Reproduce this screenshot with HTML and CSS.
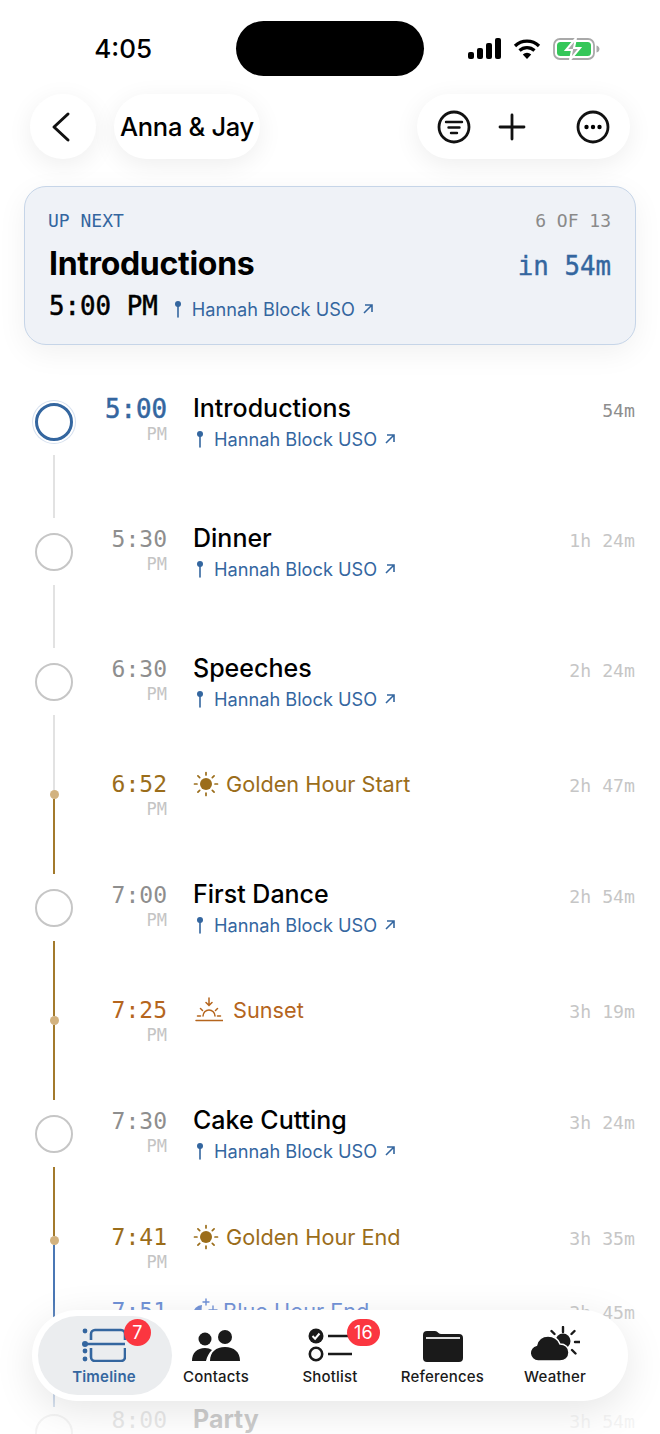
FILE: index.html
```html
<!DOCTYPE html>
<html lang="en">
<head>
  <meta charset="UTF-8" />
  <meta name="viewport" content="width=device-width, initial-scale=1" />
  <title>Anna &amp; Jay - Timeline</title>
  <link rel="stylesheet" href="styles.css">
</head>
<body>
  <svg class="defs" width="0" height="0">
    <symbol id="pin" viewBox="0 0 10 18">
      <circle cx="5" cy="4" r="3" fill="currentColor"/>
      <path d="M5 6v11" stroke="currentColor" stroke-width="1.6" stroke-linecap="round"/>
    </symbol>
    <symbol id="arrow" viewBox="0 0 12 12">
      <path d="M2 10 10 2M3 2h7v7" fill="none" stroke="currentColor" stroke-width="1.6"/>
    </symbol>
    <symbol id="sun" viewBox="0 0 26 26">
      <circle cx="13" cy="13" r="6" fill="currentColor"/>
      <path d="M13 1.5V4M13 22v2.5M1.5 13H4M22 13h2.5M4.9 4.9l1.8 1.8M19.300 19.300l1.8 1.8M4.900 21.100l1.800-1.800M19.300 6.700l1.800-1.800" stroke="currentColor" stroke-width="1.7" stroke-linecap="round"/>
    </symbol>
    <symbol id="sunset" viewBox="0 0 28 26">
      <path d="M14 1v7M11 5.500 14 8.500 17 5.500M1 23.500h27M8 19a6 6 0 0 1 12 0M2.500 19h3M22.500 19h3M5.500 11.500l2 2M22.500 11.500l-2 2" fill="none" stroke="currentColor" stroke-width="1.5" stroke-linecap="round"/>
    </symbol>
    <symbol id="bluehour" viewBox="0 0 26 26">
      <path d="M9 7a9 9 0 0 0 0 18c2 0 3-.5 4-1-4-3-5-11-4-17Z" fill="currentColor"/>
      <path d="M13 1v6M10 4h6M20 8v8M16 12h8" stroke="currentColor" stroke-width="1.4" stroke-linecap="round"/>
    </symbol>
  </svg>

  <div class="phone">
    <div class="statusbar">
      <span class="clock">4:05</span>
      <div class="island"></div>
      <div class="status-icons">
        <svg width="34" height="21" viewBox="0 0 34 21"><rect x="1" y="14" width="6" height="7" rx="2"/><rect x="10" y="10" width="6" height="11" rx="2"/><rect x="19" y="5" width="6" height="16" rx="2"/><rect x="28" y="0" width="6" height="21" rx="2"/></svg>
        <svg width="28" height="21" viewBox="0 0 28 21"><path d="M14 21 9.8 16.500a6 6 0 0 1 8.400 0Z"/><path d="M2 8a17 17 0 0 1 24 0M6.500 12.500a11 11 0 0 1 15 0" fill="none" stroke="#000" stroke-width="3.2"/></svg>
        <svg width="47" height="22" viewBox="0 0 47 22">
          <rect x="1" y="1" width="40" height="20" rx="6" fill="none" stroke="#a9a9a9" stroke-width="1.8"/>
          <path d="M43.500 7.500c2 .5 3 2 3 3.500s-1 3-3 3.500Z" fill="#a9a9a9"/>
          <rect x="4" y="4" width="34" height="14" rx="3.500" fill="#35c759"/>
          <path d="M23 0 13 12h6l-2 10 10-12h-6Z" fill="#a9a9a9" stroke="#fff" stroke-width="2"/>
        </svg>
      </div>
    </div>

    <header class="topbar">
      <button class="glass back">
        <svg width="22" height="32" viewBox="0 0 22 32"><path d="M18 3 4 16l14 13" fill="none" stroke="#111" stroke-width="3" stroke-linecap="round" stroke-linejoin="round"/></svg>
      </button>
      <div class="glass title-pill">Anna &amp; Jay</div>
      <div class="glass actions">
        <svg width="34" height="34" viewBox="0 0 34 34"><circle cx="17" cy="17" r="15" fill="none" stroke="#111" stroke-width="2.8"/><path d="M9 12h16M11.500 17.500h11M14 23h6" stroke="#111" stroke-width="2.4" stroke-linecap="round"/></svg>
        <svg width="28" height="28" viewBox="0 0 28 28"><path d="M14 2v24M2 14h24" stroke="#111" stroke-width="2.8" stroke-linecap="round"/></svg>
        <svg class="more" width="34" height="34" viewBox="0 0 34 34"><circle cx="17" cy="17" r="15" fill="none" stroke="#111" stroke-width="2.8"/><circle cx="10.500" cy="17" r="2.200"/><circle cx="17" cy="17" r="2.200"/><circle cx="23.500" cy="17" r="2.200"/></svg>
      </div>
    </header>

    <section class="next-card">
      <div class="next-row">
        <span class="mono label">UP NEXT</span>
        <span class="mono count">6 OF 13</span>
      </div>
      <div class="next-row next-main">
        <h1>Introductions</h1>
        <span class="mono countdown">in 54m</span>
      </div>
      <div class="next-meta">
        <span class="mono next-time">5:00 PM</span>
        <span class="place">
          <svg class="pin"><use href="#pin"/></svg>Hannah Block USO<svg class="arrow"><use href="#arrow"/></svg>
        </span>
      </div>
    </section>

    <main class="timeline">
      <div class="row h130">
        <div class="rail"><span class="node current"></span><span class="line grey gap-end"></span></div>
        <div class="time now"><b>5:00</b><small>PM</small></div>
        <div class="body"><h2>Introductions</h2><span class="place"><svg class="pin"><use href="#pin"/></svg>Hannah Block USO<svg class="arrow"><use href="#arrow"/></svg></span></div>
        <div class="dur strong">54m</div>
      </div>

      <div class="row h130">
        <div class="rail"><span class="node"></span><span class="line grey gap-end"></span></div>
        <div class="time"><b>5:30</b><small>PM</small></div>
        <div class="body"><h2>Dinner</h2><span class="place"><svg class="pin"><use href="#pin"/></svg>Hannah Block USO<svg class="arrow"><use href="#arrow"/></svg></span></div>
        <div class="dur">1h 24m</div>
      </div>

      <div class="row h115">
        <div class="rail"><span class="node"></span><span class="line grey"></span></div>
        <div class="time"><b>6:30</b><small>PM</small></div>
        <div class="body"><h2>Speeches</h2><span class="place"><svg class="pin"><use href="#pin"/></svg>Hannah Block USO<svg class="arrow"><use href="#arrow"/></svg></span></div>
        <div class="dur">2h 24m</div>
      </div>

      <div class="row h111 golden">
        <div class="rail"><span class="stub grey"></span><span class="dot"></span><span class="line gold gap-end"></span></div>
        <div class="time"><b>6:52</b><small>PM</small></div>
        <div class="body sun-line"><svg class="sun"><use href="#sun"/></svg>Golden Hour Start</div>
        <div class="dur">2h 47m</div>
      </div>

      <div class="row h115">
        <div class="rail"><span class="node"></span><span class="line gold"></span></div>
        <div class="time"><b>7:00</b><small>PM</small></div>
        <div class="body"><h2>First Dance</h2><span class="place"><svg class="pin"><use href="#pin"/></svg>Hannah Block USO<svg class="arrow"><use href="#arrow"/></svg></span></div>
        <div class="dur">2h 54m</div>
      </div>

      <div class="row h111 sunset">
        <div class="rail"><span class="stub gold"></span><span class="dot"></span><span class="line gold gap-end"></span></div>
        <div class="time"><b>7:25</b><small>PM</small></div>
        <div class="body sun-line"><svg class="sunset-icon"><use href="#sunset"/></svg>Sunset</div>
        <div class="dur">3h 19m</div>
      </div>

      <div class="row h116">
        <div class="rail"><span class="node"></span><span class="line gold"></span></div>
        <div class="time"><b>7:30</b><small>PM</small></div>
        <div class="body"><h2>Cake Cutting</h2><span class="place"><svg class="pin"><use href="#pin"/></svg>Hannah Block USO<svg class="arrow"><use href="#arrow"/></svg></span></div>
        <div class="dur">3h 24m</div>
      </div>

      <div class="row h74 golden">
        <div class="rail"><span class="stub gold short"></span><span class="dot"></span><span class="line blue"></span></div>
        <div class="time"><b>7:41</b><small>PM</small></div>
        <div class="body sun-line"><svg class="sun"><use href="#sun"/></svg>Golden Hour End</div>
        <div class="dur">3h 35m</div>
      </div>

      <div class="row h109 bluehour">
        <div class="rail"><span class="line blue"></span></div>
        <div class="time"><b>7:51</b></div>
        <div class="body sun-line"><svg class="sun"><use href="#bluehour"/></svg>Blue Hour End</div>
        <div class="dur">3h 45m</div>
      </div>

      <div class="row h130">
        <div class="rail"><span class="node"></span></div>
        <div class="time"><b>8:00</b></div>
        <div class="body"><h2 class="bold">Party</h2></div>
        <div class="dur">3h 54m</div>
      </div>
    </main>

    <div class="fade"></div>

    <nav class="tabbar">
      <a class="tab active">
        <span class="badge">7</span>
        <svg width="44" height="34" viewBox="0 0 44 34"><g fill="#34669f"><circle cx="3" cy="3" r="2.400"/><circle cx="3" cy="23" r="2.400"/><circle cx="3" cy="31" r="2.400"/><circle cx="3" cy="16" r="3"/></g><path d="M9 12V6a4 4 0 0 1 4-4h26a4 4 0 0 1 4 4v6M9 20v9a4 4 0 0 0 4 4h26a4 4 0 0 0 4-4v-9M3 16h40" fill="none" stroke="#34669f" stroke-width="2.6"/></svg>
        Timeline
      </a>
      <a class="tab">
        <svg width="48" height="32" viewBox="0 0 48 32"><circle cx="13" cy="9" r="6.500"/><circle cx="33" cy="7" r="7"/><path d="M0 31c0-8 5-13 13-13 3 0 5 .7 7 2-3 3-5 6.500-6 11Z"/><path d="M18 31c0-9 6-14 15-14s15 5 15 14Z"/></svg>
        Contacts
      </a>
      <a class="tab">
        <span class="badge wide">16</span>
        <svg width="44" height="34" viewBox="0 0 44 34"><circle cx="8" cy="8" r="7.500" fill="#1a1a1a"/><path d="m4.500 8 2.600 2.700L11.500 5.500" fill="none" stroke="#fff" stroke-width="2"/><circle cx="8" cy="26" r="6.200" fill="none" stroke="#1a1a1a" stroke-width="2.6"/><path d="M20 8h24M20 26h24" stroke="#1a1a1a" stroke-width="2.6"/></svg>
        Shotlist
      </a>
      <a class="tab">
        <svg width="40" height="32" viewBox="0 0 40 32"><path d="M0 5a4 4 0 0 1 4-4h8c3 0 3 3 6 3h18a4 4 0 0 1 4 4v20a4 4 0 0 1-4 4H4a4 4 0 0 1-4-4Z" fill="#1a1a1a"/><path d="M3 8h34" stroke="#fff" stroke-width="2" opacity=".85"/></svg>
        References
      </a>
      <a class="tab">
        <svg width="50" height="36" viewBox="0 0 50 36"><circle cx="33" cy="15" r="7.500"/><path d="M33 1v5M21.500 5l3 3M44.500 5l-3 3M45 16h5M42 24l3.500 3.500" stroke="#1a1a1a" stroke-width="2.4" stroke-linecap="round"/><path d="M8 35a8 8 0 0 1-1.500-15.800C8 13 13 10 18 10c6 0 10 3 12 8 5 0 9 3 9 8.500S35 35 30 35Z" stroke="#fff" stroke-width="1.5"/></svg>
        Weather
      </a>
    </nav>
  </div>
</body>
</html>
```

FILE: styles.css
```css
* {
  box-sizing: border-box;
}
body {
  margin: 0;
  background: #fff;
  color: #000;
  font-family: Inter, 'Noto Sans', sans-serif;
}
.defs {
  position: absolute;
}
.mono,
.time,
.dur {
  font-family: 'DejaVu Sans Mono', monospace;
}
.phone {
  position: relative;
  width: 660px;
  height: 1434px;
  overflow: hidden;
  background: #fff;
}

/* status bar */
.statusbar {
  display: grid;
  grid-template-columns: 236px 188px 1fr;
  height: 76px;
  padding-top: 21px;
}
.clock {
  justify-self: end;
  margin: 12px 84px 0 0;
  font-size: 26px;
  font-weight: 500;
  line-height: 32px;
}
.island {
  height: 55px;
  border-radius: 28px;
  background: #000;
}
.status-icons {
  display: flex;
  align-items: flex-start;
  gap: 12px;
  padding: 17px 0 0 43px;
}

/* top bar */
.topbar {
  display: flex;
  align-items: center;
  height: 65px;
  margin-top: 18px;
  padding: 0 30px;
}
.glass {
  height: 65px;
  border: 0;
  border-radius: 33px;
  background: #fff;
  box-shadow: 0 6px 26px rgba(0, 0, 0, 0.07);
}
.back {
  display: flex;
  align-items: center;
  justify-content: center;
  width: 66px;
  padding: 0 4px 0 0;
}
.title-pill {
  width: 146px;
  margin-left: 18px;
  font-size: 25.5px;
  font-weight: 500;
  line-height: 65px;
  text-align: center;
  letter-spacing: -0.3px;
}
.actions {
  display: flex;
  align-items: center;
  width: 213px;
  margin-left: auto;
  padding: 0 20px;
  gap: 27px;
}
.actions .more {
  margin-left: auto;
}

/* up next card */
.next-card {
  height: 159px;
  margin: 27px 24px 0;
  padding: 23px 24px 0 23px;
  border: 1px solid #c6d5e8;
  border-radius: 22px;
  background: #eff2f7;
  box-shadow: 0 8px 30px rgba(0, 0, 0, 0.06);
}
.next-row {
  display: flex;
  justify-content: space-between;
  align-items: center;
}
.label {
  font-size: 18px;
  line-height: 21px;
  color: #34669f;
}
.count {
  font-size: 18px;
  line-height: 21px;
  color: #8a8a8a;
}
.next-main {
  margin-top: 13px;
}
.next-main h1 {
  margin: 0;
  padding-left: 1px;
  font-size: 32px;
  line-height: 40px;
  font-weight: 700;
  letter-spacing: -0.3px;
}
.countdown {
  margin-top: 4px;
  font-size: 25.8px;
  -webkit-text-stroke: 0.4px #34669f;
  color: #34669f;
}
.next-meta {
  display: flex;
  align-items: center;
  margin-top: 6px;
  padding-left: 1px;
}
.next-time {
  font-size: 25.8px;
  -webkit-text-stroke: 0.5px #000;
  line-height: 32px;
}
.next-meta .place {
  margin: 6px 0 0 15px;
}

/* shared location line */
.place {
  display: inline-flex;
  align-items: center;
  font-size: 18.2px;
  line-height: 24px;
  color: #34669f;
}
.pin {
  width: 10px;
  height: 18px;
  margin-right: 9px;
}
.arrow {
  width: 12px;
  height: 12px;
  margin-left: 7px;
}

/* timeline rows */
.timeline {
  margin-top: 51px;
}
.row {
  display: grid;
  grid-template-columns: 60px 83px 1fr auto;
  margin: 0 25px 0 24px;
}
.h130 { height: 130px; }
.h116 { height: 116px; }
.h115 { height: 115px; }
.h111 { height: 111px; }
.h109 { height: 109px; }
.h74 { height: 74px; }

.rail {
  display: flex;
  flex-direction: column;
  align-items: center;
  height: 100%;
}
.node {
  flex: none;
  width: 38px;
  height: 38px;
  margin: 7px 0 14px;
  border: 2.5px solid #c6c6c6;
  border-radius: 50%;
  background: #fff;
}
.node.current {
  border: 3.5px solid #34669f;
  box-shadow: 0 0 0 2px #fff, 0 0 0 3px #d7e1ef;
}
.line,
.stub {
  width: 2px;
}
.line {
  flex: 1;
}
.stub {
  flex: none;
  height: 19px;
}
.stub.short {
  height: 12px;
}
.gap-end {
  margin-bottom: 8px;
}
.grey { background: #e2e2e2; }
.gold { background: #a37a2c; }
.blue { background: #4a77b5; }
.dot {
  flex: none;
  width: 9px;
  height: 9px;
  border-radius: 50%;
  background: #d2b27f;
}

.time {
  display: flex;
  flex-direction: column;
  align-items: flex-end;
  text-align: right;
}
.time b {
  font-size: 23px;
  font-weight: 400;
  line-height: 26px;
  color: #8e8e8e;
}
.time small {
  font-size: 17px;
  line-height: 24px;
  color: #c4c4c4;
}
.time.now b {
  font-size: 25.8px;
  -webkit-text-stroke: 0.5px #34669f;
  color: #34669f;
}
.body {
  padding-left: 26px;
}
.body h2 {
  margin: 0;
  font-size: 25px;
  font-weight: 500;
  line-height: 24px;
}
.body h2.bold {
  font-weight: 700;
}
.body .place {
  margin-top: 7px;
  padding-left: 2px;
}
.dur {
  padding-top: 5px;
  font-size: 18.2px;
  line-height: 20px;
  color: #c6c6c6;
}
.dur.strong {
  color: #8e8e8e;
}

/* sun events */
.sun-line {
  display: flex;
  align-items: flex-start;
  height: 26px;
  font-size: 21.7px;
  line-height: 26px;
}
.sun {
  width: 26px;
  height: 26px;
  margin-right: 7px;
}
.bluehour .sun {
  margin-right: 4px;
}
.sunset-icon {
  width: 28px;
  height: 26px;
  margin: 0 10px 0 2px;
}
.golden .sun-line,
.golden .time b {
  color: #9b6d1a;
}
.sunset .sun-line,
.sunset .time b {
  color: #b5651d;
}
.bluehour .sun-line,
.bluehour .time b {
  color: #6d8fd6;
}

/* bottom fade + tab bar */
.fade {
  position: absolute;
  left: 0;
  right: 0;
  bottom: 0;
  height: 134px;
  background: linear-gradient(rgba(255, 255, 255, 0), rgba(255, 255, 255, 0.8) 80%);
}
.tabbar {
  position: absolute;
  left: 32px;
  top: 1310px;
  display: grid;
  grid-template-columns: 134px 88px 140px 85px 140px;
  width: 596px;
  height: 91px;
  padding: 6px;
  border-radius: 46px;
  background: #fff;
  box-shadow: 0 10px 40px rgba(0, 0, 0, 0.1);
}
.tab {
  position: relative;
  display: flex;
  flex-direction: column;
  align-items: center;
  justify-content: flex-end;
  gap: 6px;
  height: 79px;
  padding-bottom: 9px;
  font-size: 15px;
  font-weight: 500;
  line-height: 18px;
  letter-spacing: 0.2px;
  color: #1a1a1a;
}
.tab svg {
  fill: #1a1a1a;
}
.tab.active {
  padding-right: 2px;
  border-radius: 40px;
  background: #ebedef;
  color: #34669f;
  font-weight: 600;
}
.badge {
  position: absolute;
  top: 3px;
  left: 86px;
  width: 27px;
  height: 27px;
  border-radius: 14px;
  background: #fb3640;
  color: #fff;
  font-size: 18px;
  font-weight: 400;
  line-height: 27px;
  text-align: center;
}
.badge.wide {
  left: 87px;
  width: 33px;
}
```
